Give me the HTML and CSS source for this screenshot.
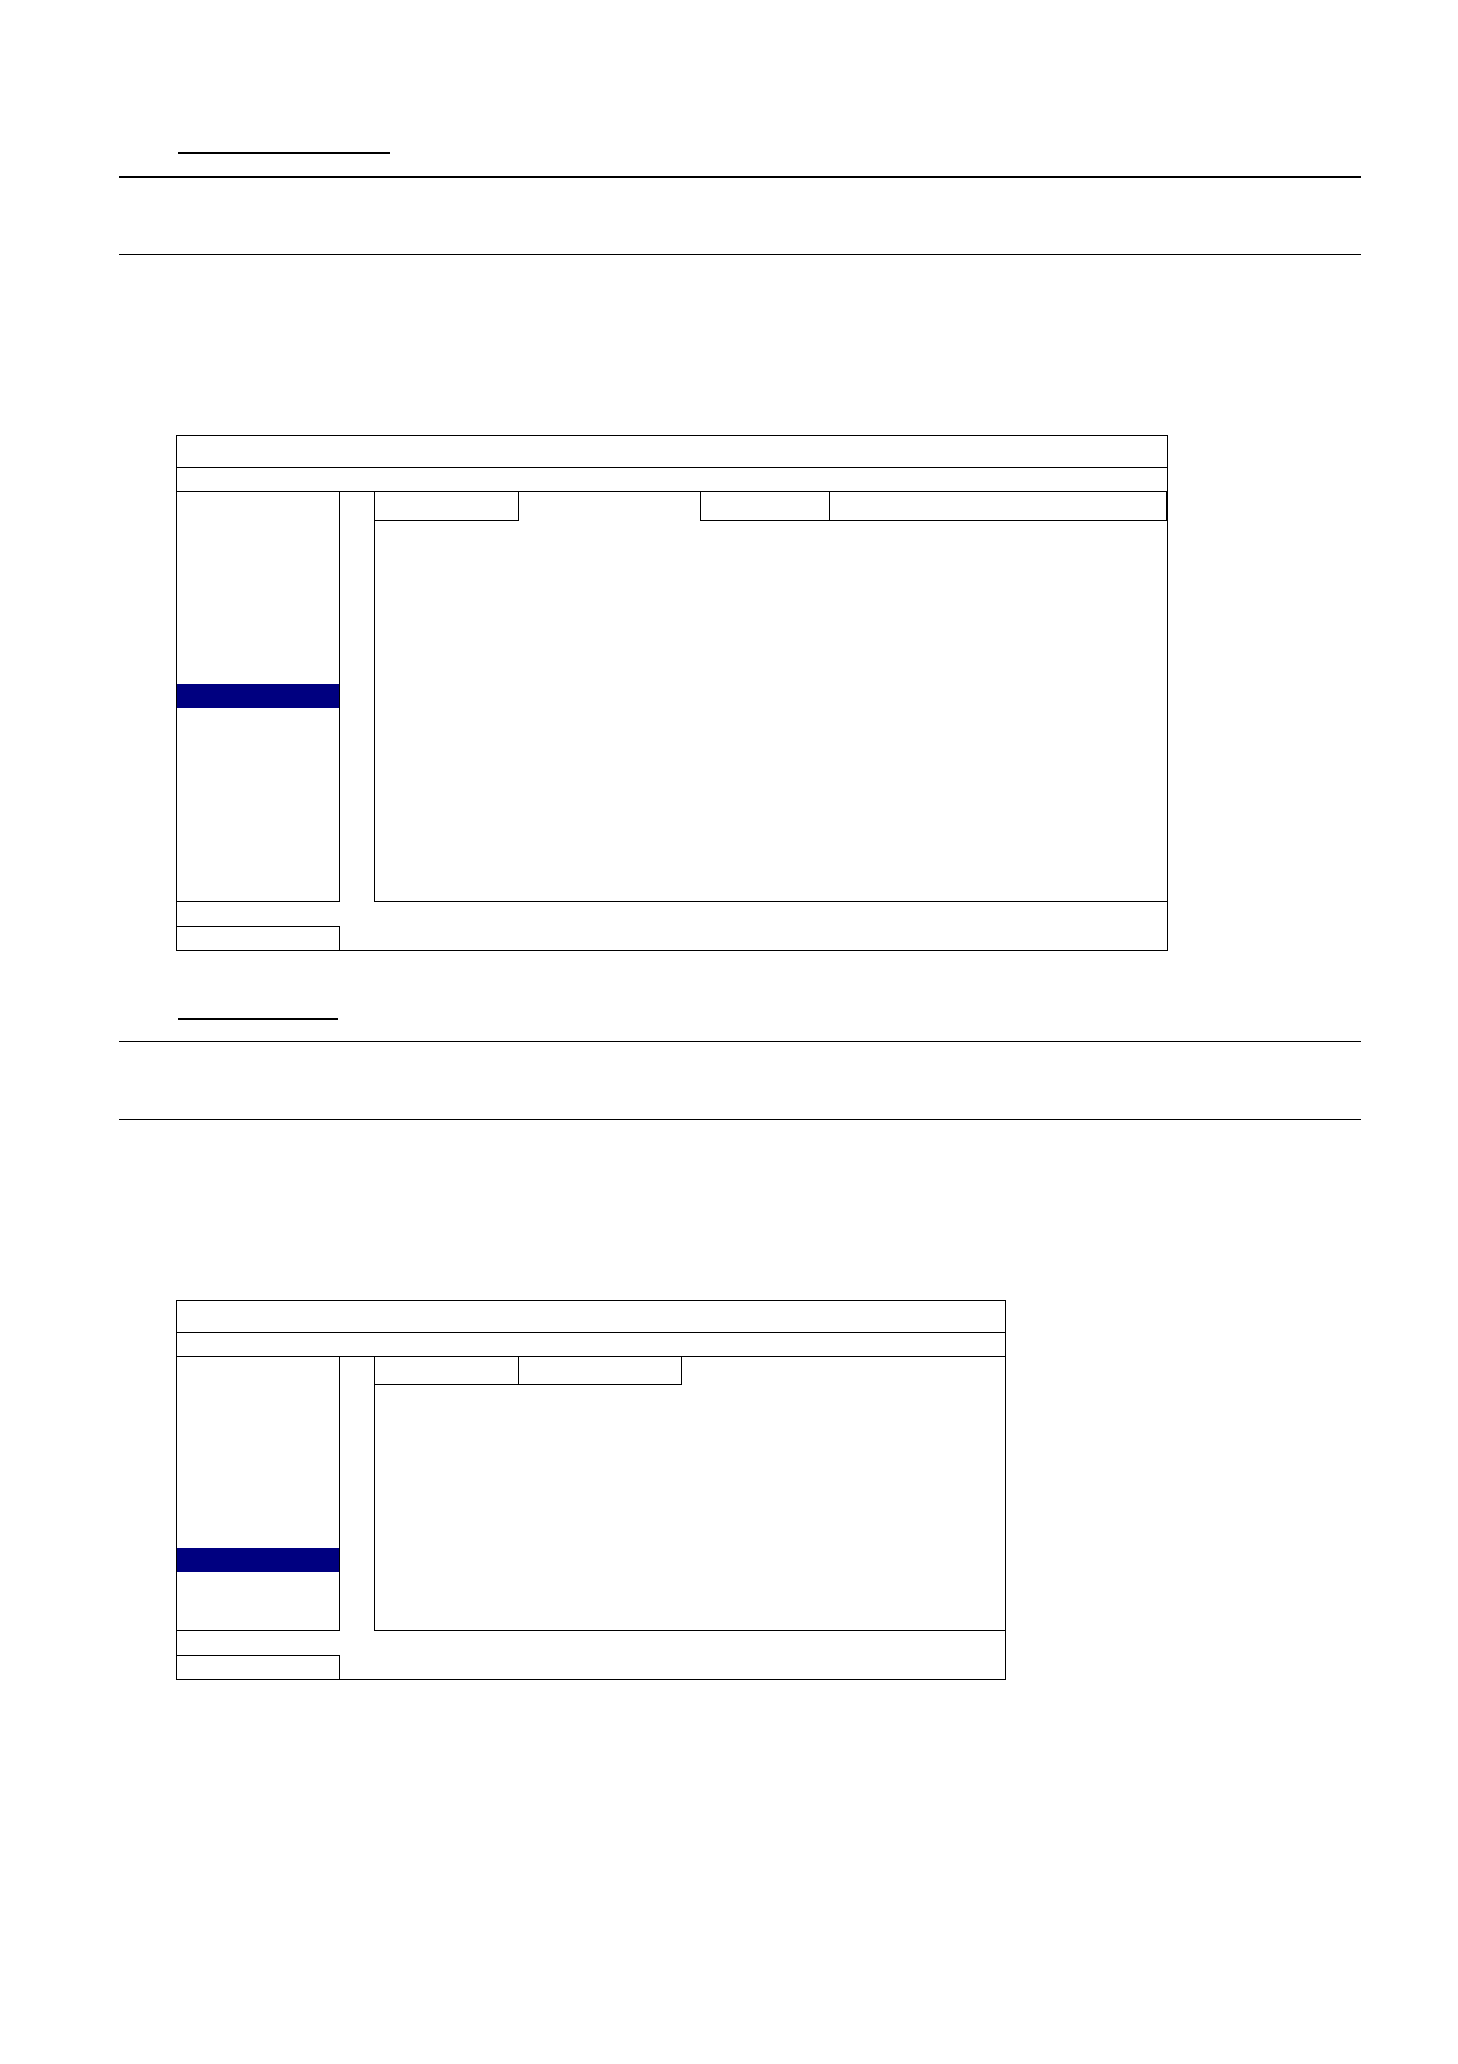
FILE: index.html
```html
<!DOCTYPE html>
<html lang="en">
<head>
<meta charset="utf-8">
<title>Menu screens</title>
<link rel="stylesheet" href="styles.css">
</head>
<body>
<div class="page">
  <div class="title-rule title-rule-1"></div>
  <div class="rule rule-thick"></div>
  <div class="rule rule-thin rule-gap-76"></div>

  <div class="win win-1">
    <div class="win-title"></div>
    <div class="win-bar"></div>
    <div class="win-body body-1">
      <div class="side">
        <div class="side-sel sel-1"></div>
      </div>
      <div class="main">
        <div class="tabs tabs-1">
          <div class="tab tab-a"></div>
          <div class="tab tab-b tab-active"></div>
          <div class="tab tab-c"></div>
          <div class="tab tab-d"></div>
        </div>
        <div class="panel"></div>
      </div>
    </div>
    <div class="foot-gap"></div>
    <div class="foot-box"></div>
  </div>

  <div class="title-rule title-rule-2"></div>
  <div class="rule rule-thin rule-gap-21"></div>
  <div class="rule rule-thin rule-gap-77"></div>

  <div class="win win-2">
    <div class="win-title"></div>
    <div class="win-bar"></div>
    <div class="win-body body-2">
      <div class="side">
        <div class="side-sel sel-2"></div>
      </div>
      <div class="main">
        <div class="tabs tabs-2">
          <div class="tab tab-a"></div>
          <div class="tab tab-b2"></div>
        </div>
        <div class="panel"></div>
      </div>
    </div>
    <div class="foot-gap"></div>
    <div class="foot-box"></div>
  </div>
</div>
</body>
</html>
```

FILE: styles.css
```css
* { box-sizing: border-box; }
html, body { margin: 0; padding: 0; background: #fff; }
body { font-family: "Liberation Sans", Arial, sans-serif; }

.page { padding-top: 152px; width: 1458px; min-height: 2064px; }

.title-rule { margin-left: 178px; border-top: 2px solid #000; height: 0; }
.title-rule-1 { width: 212px; }
.title-rule-2 { width: 160px; margin-top: 67px; }

.rule { margin-left: 119px; width: 1242px; height: 0; }
.rule-thick { border-top: 2px solid #000; margin-top: 22px; }
.rule-thin { border-top: 1px solid #000; }
.rule-gap-76 { margin-top: 76px; }
.rule-gap-21 { margin-top: 21px; }
.rule-gap-77 { margin-top: 77px; }

.win { margin-left: 176px; margin-top: 180px; border: 1px solid #000; }
.win-1 { width: 992px; }
.win-2 { width: 830px; }

.win-title { height: 32px; border-bottom: 1px solid #000; }
.win-bar { height: 24px; border-bottom: 1px solid #000; }

.win-body { display: flex; }
.body-1 { height: 410px; }
.body-2 { height: 274px; }

.side { width: 163px; height: 100%; border-right: 1px solid #000; border-bottom: 1px solid #000; }
.side-sel { height: 24px; background: #000080; }
.sel-1 { margin-top: 192px; }
.sel-2 { margin-top: 191px; }

.main { flex: 1; margin-left: 34px; height: 100%; display: flex; flex-direction: column; border-left: 1px solid #000; border-bottom: 1px solid #000; }
.tabs { display: flex; }
.tabs-1 { height: 29px; }
.tabs-2 { height: 28px; }
.tab { height: 100%; border-right: 1px solid #000; border-bottom: 1px solid #000; }
.tab-active { border-bottom: none; }
.tab-a { width: 144px; }
.tab-b { width: 182px; }
.tab-c { width: 129px; }
.tab-d { flex: 1; }
.tab-b2 { width: 163px; }
.panel { flex: 1; }

.foot-gap { height: 24px; }
.foot-box { width: 163px; height: 24px; border-top: 1px solid #000; border-right: 1px solid #000; }
```
